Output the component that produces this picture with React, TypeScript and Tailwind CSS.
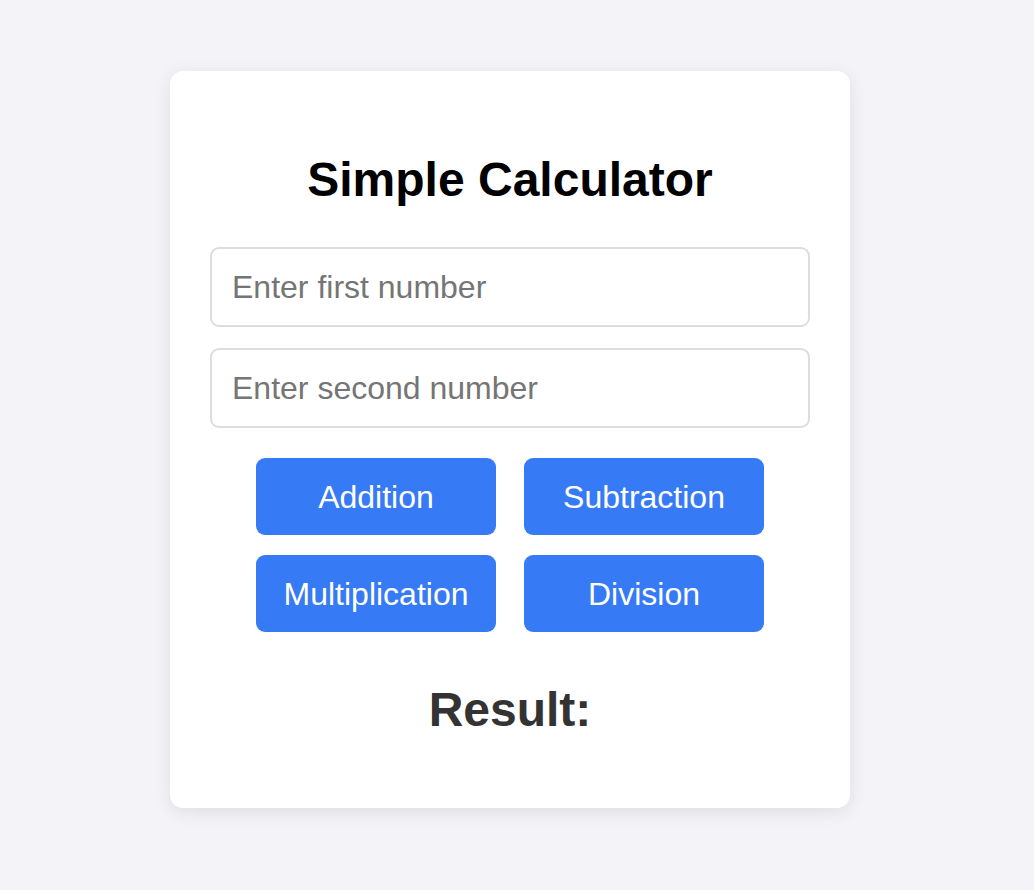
import { useState } from "react";

const ops = ["Addition", "Subtraction", "Multiplication", "Division"];

const App = () => {
    const [a, setA] = useState("");
    const [b, setB] = useState("");
    const [result, setResult] = useState<string>("");

    const calc = (op: string) => {
        const x = parseFloat(a);
        const y = parseFloat(b);
        if (isNaN(x) || isNaN(y)) return setResult("");
        if (op === "Addition") setResult(String(x + y));
        if (op === "Subtraction") setResult(String(x - y));
        if (op === "Multiplication") setResult(String(x * y));
        if (op === "Division") setResult(y === 0 ? "Error" : String(x / y));
    };

    return (
        <div className="min-h-screen bg-[#f3f3f8] flex justify-center pt-[71px] pr-[14px] font-['Liberation_Sans',Arial,sans-serif]">
            <div className="w-[680px] h-[737px] bg-white rounded-[13px] shadow-[0_4px_18px_rgba(0,0,0,0.09)] px-[40px] pt-[81px] flex flex-col">
                <h1 className="text-[48px] leading-[55px] font-bold text-black text-center mb-[40px]">
                    Simple Calculator
                </h1>
                <input
                    type="number"
                    value={a}
                    onChange={(e) => setA(e.target.value)}
                    placeholder="Enter first number"
                    className="w-full h-[80px] border-2 border-[#dddddd] rounded-[9px] px-[20px] text-[32px] text-black placeholder:text-[#757575] outline-none mb-[21px]"
                />
                <input
                    type="number"
                    value={b}
                    onChange={(e) => setB(e.target.value)}
                    placeholder="Enter second number"
                    className="w-full h-[80px] border-2 border-[#dddddd] rounded-[9px] px-[20px] text-[32px] text-black placeholder:text-[#757575] outline-none"
                />
                <div className="grid grid-cols-[240px_240px] justify-center gap-x-[28px] gap-y-[20px] mt-[30px]">
                    {ops.map((op) => (
                        <button
                            key={op}
                            onClick={() => calc(op)}
                            className="h-[77px] bg-[#377af5] text-white text-[32px] rounded-[9px]"
                        >
                            {op}
                        </button>
                    ))}
                </div>
                <h2 className="text-[48px] leading-[55px] font-bold text-[#333333] text-center mt-[50px]">
                    Result: {result}
                </h2>
            </div>
        </div>
    );
};

export default App;
